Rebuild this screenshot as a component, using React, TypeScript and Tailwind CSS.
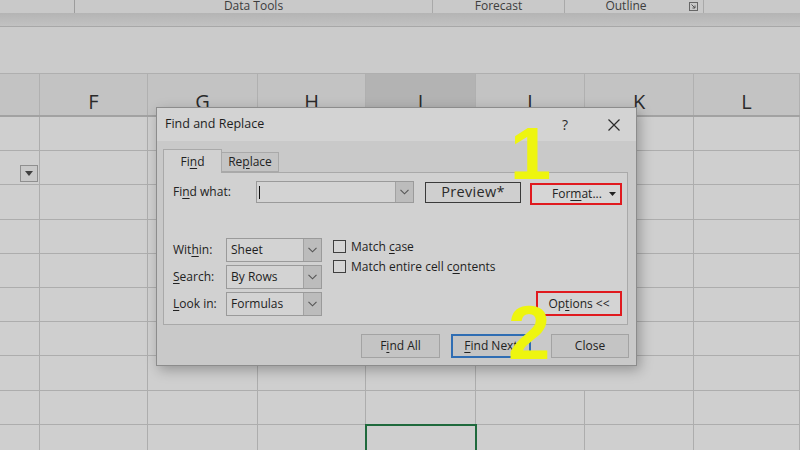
import React from "react";

const COLS = ["", "F", "G", "H", "I", "J", "K", "L"];
const ROW_COUNT = 10;

function Chevron() {
  return (
    <svg width="9" height="6" viewBox="0 0 9 6">
      <polyline points="0.5,0.8 4.5,4.8 8.5,0.8" fill="none" stroke="#555" strokeWidth="1.1" />
    </svg>
  );
}

function Select({ value, width }: { value: string; width: string }) {
  return (
    <div className={`flex h-full ${width} border border-[#9a9a9a] bg-[#d3d3d3]`}>
      <div className="flex flex-1 items-center pl-[4px] text-[#1e1e1e]">{value}</div>
      <div className="flex w-[18px] items-center justify-center border-l border-[#a2a2a2] bg-[#bcbcbc]">
        <Chevron />
      </div>
    </div>
  );
}

function Check({ children }: { children: React.ReactNode }) {
  return (
    <div className="flex h-[13px] items-center">
      <div className="h-[13px] w-[13px] border border-[#3f3f3f] bg-[#d6d6d6]" />
      <span className="ml-[5px] leading-none text-[#1e1e1e]">{children}</span>
    </div>
  );
}

export default function App() {
  return (
    <div className="relative h-[450px] w-[800px] overflow-hidden bg-[#cfcfcf] font-['Open_Sans','Noto_Sans',sans-serif] text-[#222]">
      {/* ribbon group labels */}
      <div className="flex h-[13px] bg-[#c9c9c9] text-[12px] leading-[12px] text-[#3d3d3d]">
        <div className="w-[75px] border-r border-[#9c9c9c]" />
        <div className="flex w-[358px] justify-center border-r border-[#a9a9a9]">Data Tools</div>
        <div className="flex w-[132px] justify-center border-r border-[#a9a9a9]">Forecast</div>
        <div className="relative flex w-[139px] justify-center border-r border-[#a9a9a9] pr-[16px]">
          Outline
          <svg className="absolute right-[5px] top-[2px]" width="9" height="9" viewBox="0 0 9 9">
            <rect x="0.5" y="0.5" width="8" height="8" fill="none" stroke="#666" />
            <path d="M2.5 2.5 L6 6 M6 3.5 V6 H3.5" fill="none" stroke="#555" strokeWidth="1" />
          </svg>
        </div>
        <div className="flex-1" />
      </div>
      <div className="h-[14px] border-b border-[#a8a8a8] bg-gradient-to-b from-[#b4b4b4] to-[#c2c2c2]" />
      {/* formula bar area */}
      <div className="h-[47px] border-b border-[#afafaf] bg-[#cbcbcb]" />

      {/* column headers */}
      <div className="grid h-[43px] grid-cols-[40px_108px_110px_108px_110px_109px_109px_1fr] border-b-2 border-[#a2a2a2] bg-[#c3c3c3]">
        {COLS.map((c, i) => (
          <div
            key={i}
            className={`flex items-end justify-center border-r border-[#b0b0b0] pb-[1px] text-[20px] leading-[24px] text-[#2a2a2a] ${
              c === "I" ? "bg-[#b3b3b3]" : ""
            }`}
          >
            {c}
          </div>
        ))}
      </div>

      {/* cells */}
      {Array.from({ length: ROW_COUNT }).map((_, r) => (
        <div key={r} className="grid h-[34.2px] grid-cols-[40px_108px_110px_108px_110px_109px_109px_1fr] border-b border-[#adadad]">
          {COLS.map((_, c) => (
            <div
              key={c}
              className={`flex items-end justify-end ${r === 7 && c === 5 ? "" : "border-r border-[#adadad]"} ${
                r === 9 && c === 4 ? "outline-2 -outline-offset-1 outline-[#1f6a3d]" : ""
              }`}
            >
              {r === 1 && c === 0 && (
                <div className="mb-[2px] mr-[1px] flex h-[17px] w-[18px] items-center justify-center border border-[#8f8f8f] bg-[#c9c9c9]">
                  <svg width="8" height="5" viewBox="0 0 8 5">
                    <polygon points="0,0 8,0 4,5" fill="#404040" />
                  </svg>
                </div>
              )}
            </div>
          ))}
        </div>
      ))}

      {/* Find and Replace dialog */}
      <div className="absolute left-[156px] top-[107px] flex h-[259px] w-[481px] flex-col border border-[#8c8c8c] bg-[#c9c9c9] text-[12px] shadow-[3px_4px_12px_rgba(0,0,0,0.28)]">
        <div className="flex h-[33px] items-center bg-[#d3d3d3] pl-[8px] pr-[16px]">
          <span className="text-[12.5px] text-[#1e1e1e]">Find and Replace</span>
          <span className="ml-auto mr-[40px] text-[14px] text-[#2a2a2a]">?</span>
          <svg width="12" height="12" viewBox="0 0 12 12">
            <path d="M0.5 0.5 L11.5 11.5 M11.5 0.5 L0.5 11.5" stroke="#2a2a2a" strokeWidth="1.2" />
          </svg>
        </div>

        <div className="flex flex-1 flex-col px-[6px] pt-[8px]">
          {/* tabs */}
          <div className="flex h-[23px] items-end">
            <div className="relative z-10 -mb-px flex h-[24px] w-[59px] items-center justify-center border border-b-0 border-[#a9a9a9] bg-[#d1d1d1]">
              Fi<u className="underline-offset-2">n</u>d
            </div>
            <div className="flex h-[20px] w-[57px] items-center justify-center border border-l-0 border-[#a9a9a9] bg-[#c4c4c4]">
              Re<u className="underline-offset-2">p</u>lace
            </div>
          </div>

          {/* tab panel */}
          <div className="flex h-[153px] w-[465px] flex-col border border-[#a9a9a9] bg-[#d1d1d1] pl-[9px] pt-[8px]">
            <div className="flex h-[22px] items-center">
              <span className="w-[83px]">
                Fi<u className="underline-offset-2">n</u>d what:
              </span>
              <div className="flex h-[22px] w-[158px] border border-[#9a9a9a] bg-[#d3d3d3]">
                <div className="flex flex-1 items-center pl-[2px]">
                  <div className="h-[13px] w-px bg-[#111]" />
                </div>
                <div className="flex w-[18px] items-center justify-center border-l border-[#a2a2a2] bg-[#bcbcbc]">
                  <Chevron />
                </div>
              </div>
              <div className="ml-[11px] flex h-[21px] w-[96px] items-center justify-center border-[1.5px] border-[#3a3a3a] bg-[#cfcfcf] text-[14.5px] tracking-[0.3px] text-[#2a2a2a]">
                Preview*
              </div>
              <div className="ml-[9px] mt-[3px] flex h-[22px] w-[92px] items-center border-2 border-[#e01a1f] bg-[#d6d6d6] pl-[20px] pr-[4px]">
                <span>
                  For<u className="underline-offset-2">m</u>at...
                </span>
                <svg className="ml-auto" width="7" height="4" viewBox="0 0 7 4">
                  <polygon points="0,0 7,0 3.5,4" fill="#222" />
                </svg>
              </div>
            </div>

            <div className="mt-[35px] flex">
              <div className="flex flex-col gap-[3px]">
                {[
                  { label: <>Wit<u className="underline-offset-2">h</u>in:</>, value: "Sheet" },
                  { label: <><u className="underline-offset-2">S</u>earch:</>, value: "By Rows" },
                  { label: <><u className="underline-offset-2">L</u>ook in:</>, value: "Formulas" },
                ].map((row, i) => (
                  <div key={i} className="flex h-[24px] items-center">
                    <span className="w-[53px]">{row.label}</span>
                    <Select value={row.value} width="w-[96px]" />
                  </div>
                ))}
              </div>
              <div className="ml-[11px] flex flex-col gap-[7px] pt-[2px]">
                <Check>
                  Match <u className="underline-offset-2">c</u>ase
                </Check>
                <Check>
                  Match entire cell c<u className="underline-offset-2">o</u>ntents
                </Check>
              </div>
              <div className="ml-auto mr-[5px] flex h-[25px] w-[86px] items-center justify-center self-end border-2 border-[#e01a1f] bg-[#d4d4d4]">
                Op<u className="underline-offset-2">t</u>ions &lt;&lt;
              </div>
            </div>
          </div>

          {/* bottom buttons */}
          <div className="mt-[9px] flex h-[24px] pr-[1px]">
            <div className="ml-auto flex w-[79px] items-center justify-center border border-[#a3a3a3] bg-[#c4c4c4]">
              F<u className="underline-offset-2">i</u>nd All
            </div>
            <div className="ml-[11px] flex w-[80px] items-center justify-center border-2 border-[#2f6db3] bg-[#c4c4c4]">
              <u className="underline-offset-2">F</u>ind Next
            </div>
            <div className="ml-[20px] flex w-[78px] items-center justify-center border border-[#a3a3a3] bg-[#c4c4c4]">
              Close
            </div>
          </div>
        </div>
      </div>

      {/* yellow annotations */}
      <div className="absolute left-[510px] top-[117px] font-['Liberation_Sans',sans-serif] text-[74px] font-bold leading-none text-[#eef50f]">
        1
      </div>
      <div className="absolute left-[508px] top-[295px] font-['Liberation_Sans',sans-serif] text-[76px] font-bold leading-none text-[#eef50f]">
        2
      </div>
    </div>
  );
}
